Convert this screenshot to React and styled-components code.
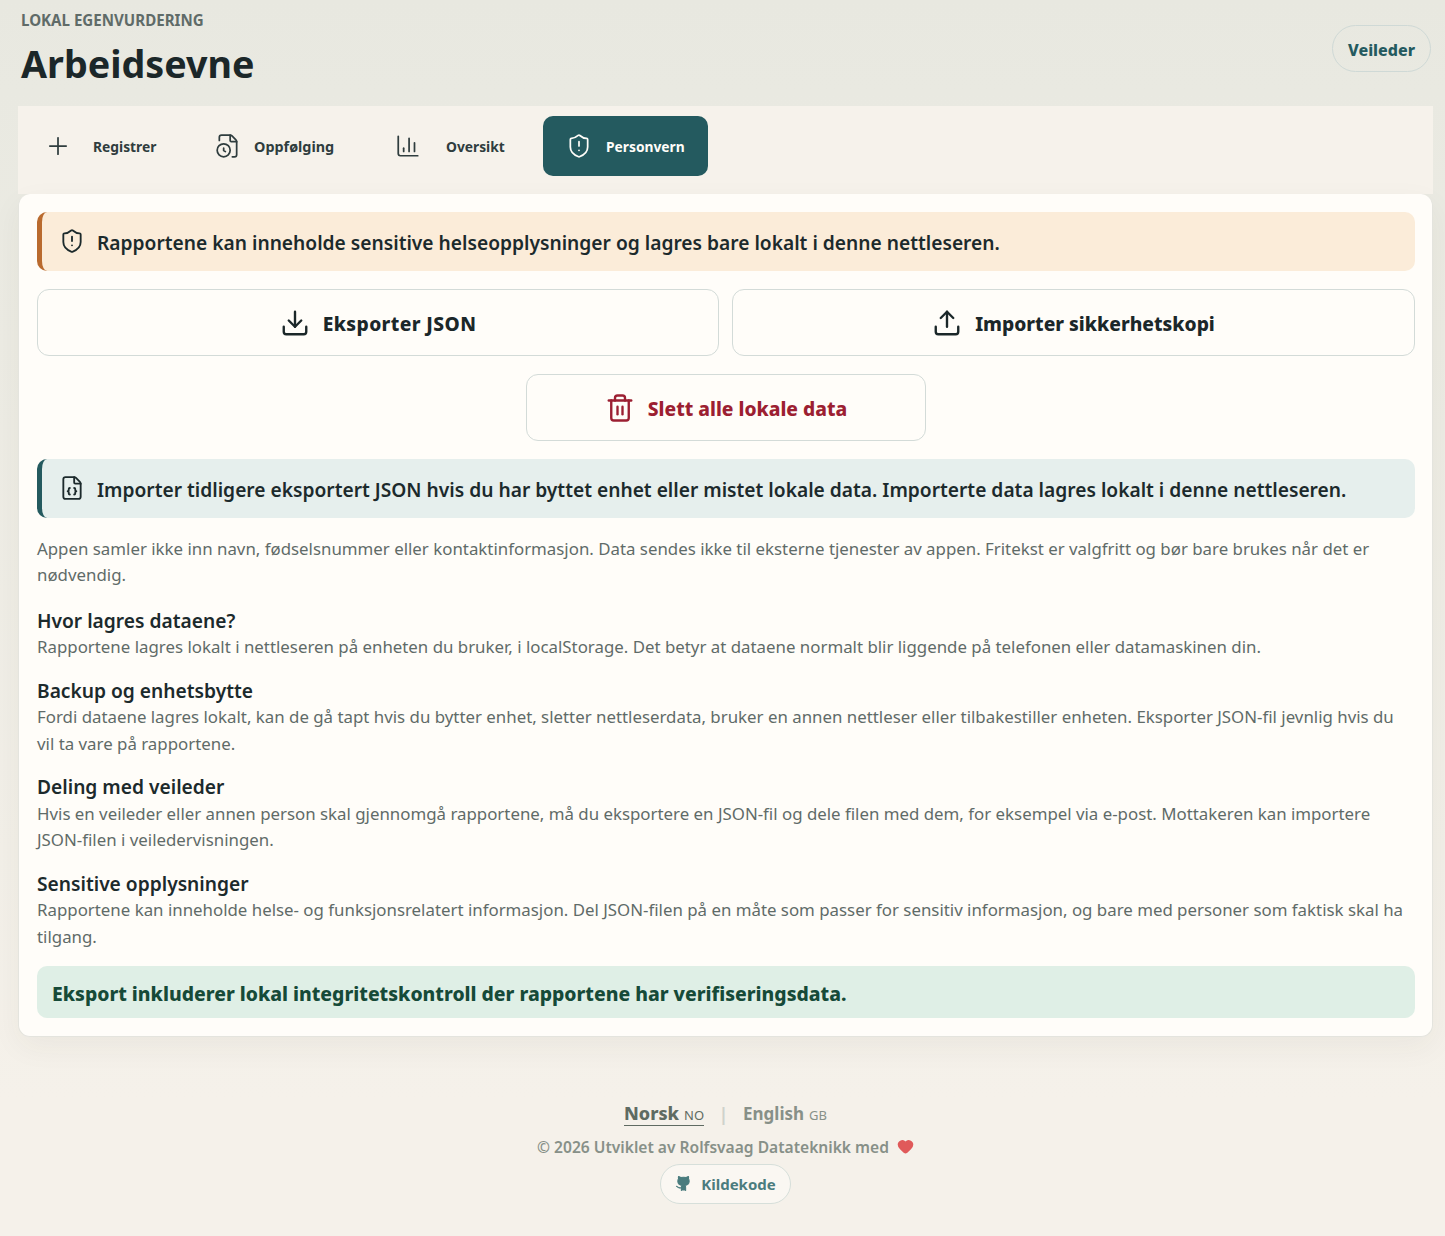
import React from "react";
import styled, { createGlobalStyle } from "styled-components";
import { Plus, FileClock, ChartColumn, ShieldAlert, Download, Upload, Trash2, FileJson, Github, Heart } from "lucide-react";

const Global = createGlobalStyle`
  html, body { margin: 0; padding: 0; }
  body {
    min-height: 1236px;
    font-family: "Noto Sans", "Open Sans", sans-serif;
    color: #1d2a2c;
    background: linear-gradient(180deg, #e8e8e0 0, #e9e9e1 90px, #f5f1ea 1100px, #f5f1ea 100%);
  }
`;
const Page = styled.div`
  display: flex;
  flex-direction: column;
  width: 1445px;
  height: 1236px;
  padding: 0 12px 0 18px;
  box-sizing: border-box;
`;
const Header = styled.header`
  display: flex;
  justify-content: space-between;
  height: 106px;
  padding: 11px 2px 0 3px;
  box-sizing: border-box;
`;
const Eyebrow = styled.div`
  font-size: 15.1px;
  font-weight: 700;
  line-height: 19px;
  color: #5f6b68;
`;
const Title = styled.h1`
  margin: 8px 0 0;
  font-size: 37.7px;
  line-height: 52px;
  font-weight: 700;
  color: #1b2729;
`;
const GuideButton = styled.button`
  margin-top: 14px;
  width: 99px;
  height: 47px;
  padding: 2px 0 0;
  border-radius: 24px;
  border: 1px solid #cfd9d6;
  background: transparent;
  font: 800 16px "Noto Sans", sans-serif;
  color: #245a5f;
`;
const TabBar = styled.nav`
  display: flex;
  align-items: flex-start;
  height: 88px;
  padding: 10px 0 0;
  box-sizing: border-box;
  background: #f6f2eb;
  width: 1415px;
`;
const Tab = styled.div`
  display: flex;
  align-items: center;
  flex: none;
  width: ${p => p.$w}px;
  height: 60px;
  padding-left: ${p => p.$pl}px;
  gap: ${p => p.$gap}px;
  box-sizing: border-box;
  border-radius: 10px;
  background: ${p => (p.$active ? "#245a5f" : "transparent")};
  color: ${p => (p.$active ? "#fffdf9" : "#2f3d3e")};
  font-size: ${p => p.$fs || 13.8}px;
  font-weight: 700;
`;
const Card = styled.main`
  width: 1415px;
  flex: none;
  box-sizing: border-box;
  padding: 18px 17px 17.5px 18px;
  background: #fffdf9;
  border: 1px solid #e4e4de;
  border-top: 0;
  border-radius: 12px;
  box-shadow: 0 10px 30px rgba(60, 60, 40, 0.05);
  display: flex;
  flex-direction: column;
`;
const Notice = styled.div`
  display: flex;
  flex: none;
  align-items: center;
  gap: 12.5px;
  height: 59px;
  box-sizing: border-box;
  padding: 2px 0 0 16.5px;
  border-left: 5px solid ${p => p.$c};
  border-radius: 10px;
  background: ${p => p.$bg};
  font-size: 19.2px;
  font-weight: 600;
  color: #1c2a2c;

  svg { margin-bottom: 4px; flex: none; }
`;
const ButtonRow = styled.div`
  display: grid;
  grid-template-columns: 682px 1fr;
  gap: 13px;
  margin-top: 18px;
`;
const Action = styled.button`
  display: flex;
  align-items: center;
  justify-content: center;
  gap: 13px;
  height: 67px;
  padding: 2px 0 0;
  border: 1px solid #d3dbd8;
  border-radius: 12px;
  background: #fffdf9;
  font: 800 19.2px "Noto Sans", sans-serif;
  letter-spacing: ${p => p.$track || 0}px;
  color: ${p => p.$c || "#1b2729"};

  svg { margin-bottom: 2px; }
`;
const DangerWrap = styled.div`
  display: flex;
  justify-content: center;
  margin: 18px 0;
`;
const DangerAction = styled(Action)`
  width: 400px;
`;
const Body = styled.p`
  margin: ${p => p.$mt || 0}px 0 ${p => p.$mb || 0}px;
  max-width: 1372px;
  font-size: 16.85px;
  line-height: 26.4px;
  color: #5f6b68;
`;
const Heading = styled.h3`
  margin: 17.2px 0 0;
  font-size: 19.2px;
  line-height: 26.4px;
  font-weight: 600;
  color: #1c2a2c;
`;
const Success = styled.div`
  display: flex;
  flex: none;
  align-items: center;
  height: 52px;
  margin-top: 16.3px;
  padding: 2px 0 0 15px;
  box-sizing: border-box;
  border-radius: 10px;
  background: #dfefe6;
  color: #164a38;
  font-size: 19.34px;
  font-weight: 800;
`;
const Footer = styled.footer`
  display: flex;
  flex-direction: column;
  align-items: center;
  margin-top: 63.5px;
`;
const Langs = styled.div`
  display: flex;
  align-items: center;
  gap: 14.5px;
  height: 27px;
  color: #879088;
`;
const Lang = styled.span`
  display: inline-flex;
  align-items: baseline;
  gap: 5px;
  font-size: ${p => (p.$active ? 18 : 17)}px;
  font-weight: ${p => (p.$active ? 800 : 700)};
  color: ${p => (p.$active ? "#5f6b62" : "#879088")};
  border-bottom: 1px solid ${p => (p.$active ? "#5f6b62" : "transparent")};
`;
const Code = styled.small`
  font-size: 13px;
  font-weight: 400;
`;
const Sep = styled.span`
  color: #cfd2cc;
  font-size: 18px;
  font-weight: 700;
`;
const Copy = styled.div`
  display: flex;
  align-items: center;
  gap: 8px;
  margin-top: 8.5px;
  height: 22px;
  font-size: 15.6px;
  font-weight: 600;
  color: #879088;
`;
const SourceLink = styled.a`
  display: flex;
  align-items: center;
  gap: 9px;
  margin-top: 6px;
  height: 40px;
  padding: 0 14px;
  box-sizing: border-box;
  border: 1px solid #d6dfda;
  border-radius: 20px;
  background: #faf7f2;
  font-size: 15px;
  font-weight: 700;
  color: #4a7c7e;
`;

export default function App() {
  return (
    <Page>
      <Global />
      <Header>
        <div>
          <Eyebrow>LOKAL EGENVURDERING</Eyebrow>
          <Title>Arbeidsevne</Title>
        </div>
        <GuideButton>Veileder</GuideButton>
      </Header>
      <TabBar>
        <Tab $w={170} $pl={25.5} $gap={21.5}><Plus size={28} strokeWidth={1.5} />Registrer</Tab>
        <Tab $w={184} $pl={26.5} $gap={13.5} $fs={14.4}><FileClock size={26} strokeWidth={1.6} />Oppfølging</Tab>
        <Tab $w={171} $pl={23} $gap={25}><ChartColumn size={26} strokeWidth={1.6} />Oversikt</Tab>
        <Tab $active $w={165} $pl={22.5} $gap={14.5}><ShieldAlert size={26} strokeWidth={1.6} />Personvern</Tab>
      </TabBar>
      <Card>
        <Notice $c="#b96a2e" $bg="#fbecd9"><ShieldAlert size={26} strokeWidth={1.7} />Rapportene kan inneholde sensitive helseopplysninger og lagres bare lokalt i denne nettleseren.</Notice>
        <ButtonRow>
          <Action $track={0.4}><Download size={30} strokeWidth={1.9} />Eksporter JSON</Action>
          <Action><Upload size={30} strokeWidth={1.9} />Importer sikkerhetskopi</Action>
        </ButtonRow>
        <DangerWrap>
          <DangerAction $c="#9c1f32"><Trash2 size={30} strokeWidth={1.9} />Slett alle lokale data</DangerAction>
        </DangerWrap>
        <Notice $c="#245a5f" $bg="#e6efed"><FileJson size={26} strokeWidth={1.7} />Importer tidligere eksportert JSON hvis du har byttet enhet eller mistet lokale data. Importerte data lagres lokalt i denne nettleseren.</Notice>
        <Body $mt={18} $mb={2}>Appen samler ikke inn navn, fødselsnummer eller kontaktinformasjon. Data sendes ikke til eksterne tjenester av appen. Fritekst er valgfritt og bør bare brukes når det er nødvendig.</Body>
        <Heading>Hvor lagres dataene?</Heading>
        <Body>Rapportene lagres lokalt i nettleseren på enheten du bruker, i localStorage. Det betyr at dataene normalt blir liggende på telefonen eller datamaskinen din.</Body>
        <Heading>Backup og enhetsbytte</Heading>
        <Body>Fordi dataene lagres lokalt, kan de gå tapt hvis du bytter enhet, sletter nettleserdata, bruker en annen nettleser eller tilbakestiller enheten. Eksporter JSON-fil jevnlig hvis du vil ta vare på rapportene.</Body>
        <Heading>Deling med veileder</Heading>
        <Body>Hvis en veileder eller annen person skal gjennomgå rapportene, må du eksportere en JSON-fil og dele filen med dem, for eksempel via e-post. Mottakeren kan importere JSON-filen i veiledervisningen.</Body>
        <Heading>Sensitive opplysninger</Heading>
        <Body>Rapportene kan inneholde helse- og funksjonsrelatert informasjon. Del JSON-filen på en måte som passer for sensitiv informasjon, og bare med personer som faktisk skal ha tilgang.</Body>
        <Success>Eksport inkluderer lokal integritetskontroll der rapportene har verifiseringsdata.</Success>
      </Card>
      <Footer>
        <Langs>
          <Lang $active>Norsk <Code>NO</Code></Lang>
          <Sep>|</Sep>
          <Lang>English <Code>GB</Code></Lang>
        </Langs>
        <Copy>© 2026 Utviklet av Rolfsvaag Datateknikk med <Heart size={17} fill="#e05a5a" stroke="#e05a5a" /></Copy>
        <SourceLink><Github size={17} fill="#4a7c7e" strokeWidth={1.5} />Kildekode</SourceLink>
      </Footer>
    </Page>
  );
}
